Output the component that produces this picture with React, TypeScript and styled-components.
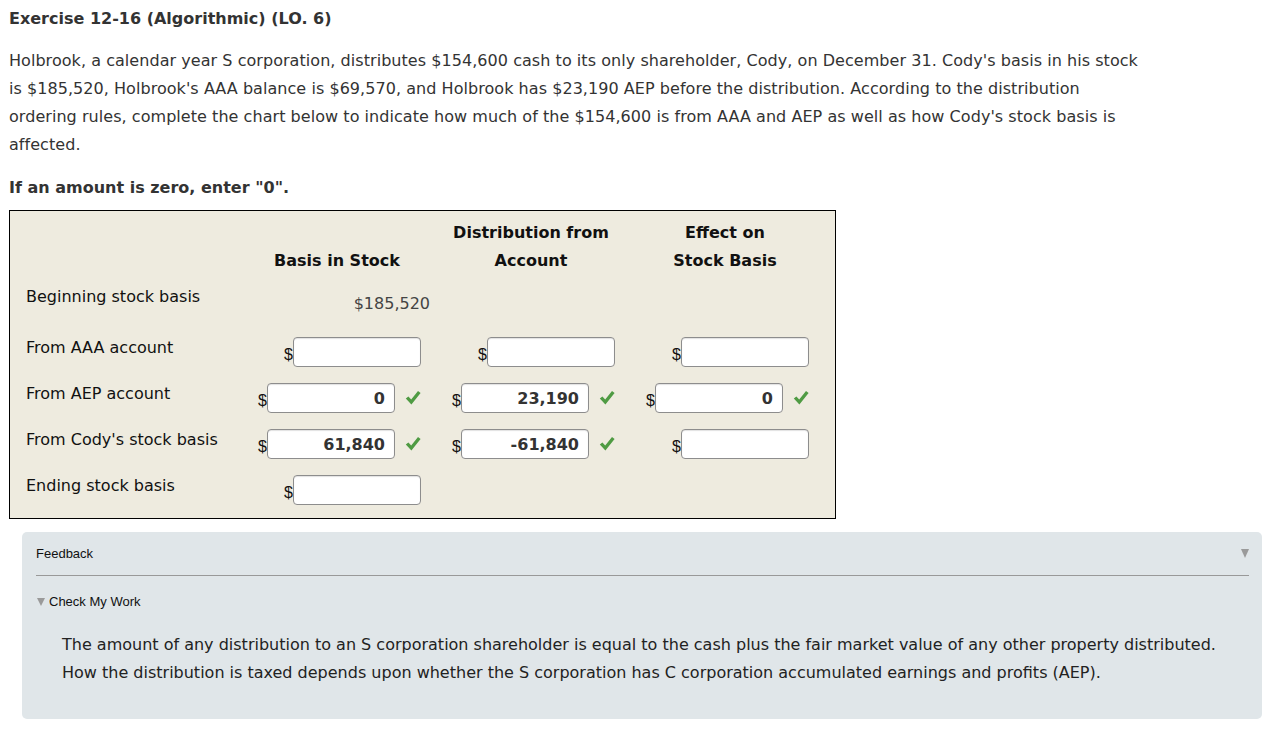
import React from 'react';
import styled, { createGlobalStyle } from 'styled-components';

const GlobalStyle = createGlobalStyle`
  body {
    margin: 8px;
    background: #ffffff;
    font-family: 'DejaVu Sans', Verdana, sans-serif;
    color: #333333;
  }
`;

const Title = styled.h1`
  margin: 0 0 17px 1px;
  font-size: 16px;
  line-height: 22px;
  font-weight: bold;
  color: #333;
`;

const Paragraph = styled.p`
  margin: 0 0 15px 1px;
  width: 1135px;
  font-size: 16px;
  line-height: 28px;
  letter-spacing: 0.05px;
`;

const Instruction = styled.p`
  margin: 0 0 8px 1px;
  font-size: 16px;
  line-height: 28px;
  font-weight: bold;
`;

const Chart = styled.div`
  width: 825px;
  margin-left: 1px;
  border: 1px solid #000;
  background: #eeebdf;
  padding-bottom: 5px;
  color: #111;
`;

const Row = styled.div<{ $height?: number }>`
  display: grid;
  grid-template-columns: 230px repeat(3, 194px);
  align-items: center;
  height: ${(p) => p.$height ?? 46}px;
`;

const HeaderRow = styled(Row)`
  align-items: end;
  padding: 8px 0;
`;

const HeaderCell = styled.div`
  font-size: 16px;
  line-height: 28px;
  font-weight: bold;
  text-align: center;
`;

const Label = styled.div<{ $lift?: number }>`
  padding-left: 16px;
  font-size: 16px;
  line-height: 20px;
  margin-bottom: ${(p) => p.$lift ?? 8}px;
`;

const Cell = styled.div`
  display: flex;
  justify-content: flex-end;
  align-items: center;
  padding-right: 13px;
`;

const StaticValue = styled.div`
  margin-right: -9px;
  margin-bottom: 4px;
  font-size: 16px;
  line-height: 20px;
  color: #444;
`;

const Dollar = styled.span`
  font-family: 'Liberation Sans', Arial, sans-serif;
  font-size: 16px;
  line-height: 18px;
  margin-top: 6px;
  color: #111;
`;

const AmountInput = styled.input`
  box-sizing: border-box;
  width: 128px;
  height: 30px;
  margin: 0;
  padding: 0 9px;
  border: 1px solid #8d8d8d;
  border-radius: 4px;
  box-shadow: inset 0 1px 1px rgba(0, 0, 0, 0.12);
  background: #fff;
  font-family: 'DejaVu Sans', Verdana, sans-serif;
  font-size: 16px;
  font-weight: bold;
  color: #333;
  text-align: right;
  outline: none;
`;

const CheckMark = styled.svg`
  margin-left: 10px;
  flex: none;
`;

const Feedback = styled.div`
  margin: 13px 0 0 14px;
  height: 187px;
  box-sizing: border-box;
  padding: 12px 13px 0 14px;
  background: #e0e6e9;
  border-radius: 5px;
  font-family: 'Liberation Sans', Arial, sans-serif;
  color: #111;
`;

const FeedbackHead = styled.div`
  display: flex;
  justify-content: space-between;
  align-items: center;
  height: 18px;
  font-size: 13px;
  padding-bottom: 13px;
  border-bottom: 1px solid #999;
`;

const Triangle = styled.span<{ $size: number }>`
  display: inline-block;
  width: 0;
  height: 0;
  border-left: ${(p) => p.$size / 2}px solid transparent;
  border-right: ${(p) => p.$size / 2}px solid transparent;
  border-top: ${(p) => p.$size}px solid #9a9a9a;
`;

const Toggle = styled.div`
  display: flex;
  align-items: center;
  gap: 4px;
  margin-top: 18px;
  padding-left: 1px;
  font-size: 13px;
  line-height: 16px;
`;

const FeedbackText = styled.p`
  margin: 21px 0 0 26px;
  font-family: 'DejaVu Sans', Verdana, sans-serif;
  font-size: 16px;
  line-height: 28px;
  color: #222;
`;

const Check = () => (
  <CheckMark width="16" height="16" viewBox="0 0 16 16">
    <path d="M0.8 8.6 L3.4 6.4 L6.2 9.6 L13 1 L15.6 3 L6.4 14.4 Z" fill="#4f9b43" />
  </CheckMark>
);

type Entry = { value?: string; checked?: boolean };

const Amount: React.FC<Entry> = ({ value, checked }) => (
  <Cell>
    <Dollar>$</Dollar>
    <AmountInput readOnly value={value ?? ''} />
    {checked && <Check />}
  </Cell>
);

const rows: { label: string; cells: Entry[] }[] = [
  { label: 'From AAA account', cells: [{}, {}, {}] },
  {
    label: 'From AEP account',
    cells: [
      { value: '0', checked: true },
      { value: '23,190', checked: true },
      { value: '0', checked: true },
    ],
  },
  {
    label: "From Cody's stock basis",
    cells: [{ value: '61,840', checked: true }, { value: '-61,840', checked: true }, {}],
  },
];

export default function App() {
  return (
    <>
      <GlobalStyle />
      <Title>Exercise 12-16 (Algorithmic) (LO. 6)</Title>
      <Paragraph>
        Holbrook, a calendar year S corporation, distributes $154,600 cash to its only shareholder, Cody, on
        December 31. Cody's basis in his stock is $185,520, Holbrook's AAA balance is $69,570, and Holbrook has
        $23,190 AEP before the distribution. According to the distribution ordering rules, complete the chart
        below to indicate how much of the $154,600 is from AAA and AEP as well as how Cody's stock basis is
        affected.
      </Paragraph>
      <Instruction>If an amount is zero, enter "0".</Instruction>

      <Chart>
        <HeaderRow $height={56}>
          <div />
          <HeaderCell>Basis in Stock</HeaderCell>
          <HeaderCell>
            Distribution from
            <br />
            Account
          </HeaderCell>
          <HeaderCell>
            Effect on
            <br />
            Stock Basis
          </HeaderCell>
        </HeaderRow>

        <Row>
          <Label $lift={18}>Beginning stock basis</Label>
          <Cell>
            <StaticValue>$185,520</StaticValue>
          </Cell>
          <div />
          <div />
        </Row>

        {rows.map((row) => (
          <Row key={row.label}>
            <Label>{row.label}</Label>
            {row.cells.map((c, i) => (
              <Amount key={i} {...c} />
            ))}
          </Row>
        ))}

        <Row>
          <Label>Ending stock basis</Label>
          <Amount />
          <div />
          <div />
        </Row>
      </Chart>

      <Feedback>
        <FeedbackHead>
          <span>Feedback</span>
          <Triangle $size={9} />
        </FeedbackHead>
        <Toggle>
          <Triangle $size={8} />
          Check My Work
        </Toggle>
        <FeedbackText>
          The amount of any distribution to an S corporation shareholder is equal to the cash plus the fair
          market value of any other property distributed.
          <br />
          How the distribution is taxed depends upon whether the S corporation has C corporation accumulated
          earnings and profits (AEP).
        </FeedbackText>
      </Feedback>
    </>
  );
}
